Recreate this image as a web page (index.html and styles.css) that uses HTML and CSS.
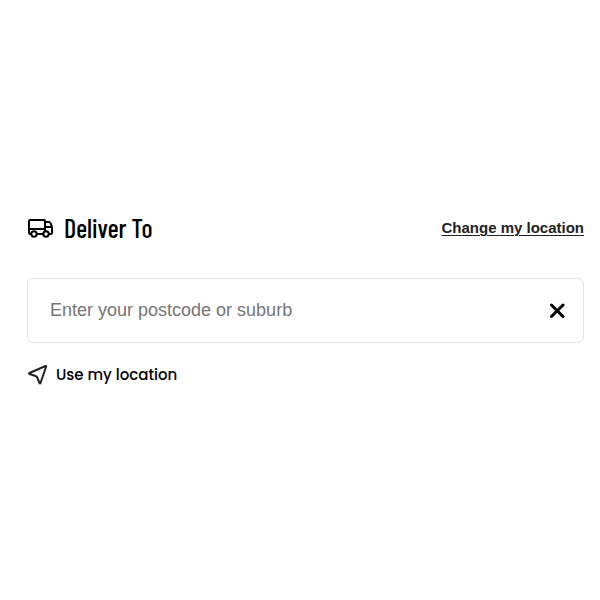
FILE: index.html
```html
<!DOCTYPE html>
<html lang="en">
<head>
    <meta charset="UTF-8">
    <meta name="viewport" content="width=device-width, initial-scale=1.0">
    <title>Deliver To</title>
    <link rel="stylesheet" href="styles.css">
</head>
<body>
    <main class="delivery">
        <div class="delivery-header">
            <h1>
                <svg width="26" height="20" viewBox="0 0 26 20" aria-hidden="true">
                    <path d="M4 16H3Q2 16 2 15V3Q2 2 3 2H17Q18 2 18 3V13M10 16H16M2 11H18M18 4H22Q23 4 24 6L25 10V15Q25 16 24 16H22M18 9H25"/>
                    <circle cx="7" cy="16" r="2.700"/>
                    <circle cx="19" cy="16" r="2.700"/>
                </svg>
                Deliver To
            </h1>
            <a href="#" class="change-link">Change my location</a>
        </div>
        <form class="search-box" id="location-form">
            <input type="text" id="postcode" name="postcode" aria-label="Enter your postcode or suburb" placeholder="Enter your postcode or suburb">
            <button type="reset" class="clear-button" aria-label="Clear">
                <svg width="16" height="16" viewBox="0 0 16 16" aria-hidden="true">
                    <path d="M2.500 3L14 14.500M14 3L2.500 14.500"/>
                </svg>
            </button>
        </form>
        <button type="button" class="locate-button">
            <svg width="20" height="20" viewBox="0 0 20 20" aria-hidden="true">
                <path d="M18.500 1Q19.500 1 19 2L13.500 18Q13 19 12.500 18L10 12Q9.500 11 8.500 11L2.500 9Q1.500 8.500 2.500 8Z"/>
            </svg>
            Use my location
        </button>
    </main>
</body>
</html>
```
FILE: styles.css
```css
* {
    box-sizing: border-box;
}
body {
    margin: 0;
    min-height: 100vh;
    display: flex;
    align-items: center;
    background-color: #fff;
    color: #000;
    font-family: "Liberation Sans", Arial, sans-serif;
}
.delivery {
    width: 100%;
    padding: 0 16px 2px 27px;
}
.delivery-header {
    display: flex;
    justify-content: space-between;
    align-items: center;
    margin-bottom: 34px;
}
h1 {
    display: flex;
    align-items: center;
    gap: 11px;
    margin: 0;
    font-family: "Barlow Condensed", "Roboto Condensed", "Liberation Sans", sans-serif;
    font-size: 26px;
    font-weight: 500;
    line-height: 32px;
}
svg {
    flex: none;
    fill: none;
    stroke: #000;
    stroke-width: 2;
    stroke-linecap: round;
    stroke-linejoin: round;
}
.change-link {
    color: #222;
    font-size: 15px;
    font-weight: 700;
    text-underline-offset: 2px;
    text-decoration-thickness: 1px;
}
.search-box {
    display: flex;
    align-items: center;
    height: 65px;
    padding: 0 18px 0 22px;
    border: 1px solid #e2e2e2;
    border-radius: 6px;
}
.search-box input {
    flex: 1;
    min-width: 0;
    padding: 0;
    border: none;
    outline: none;
    background: none;
    font-family: inherit;
    font-size: 18px;
}
.search-box input::placeholder {
    color: #757575;
}
.clear-button,
.locate-button {
    display: flex;
    align-items: center;
    padding: 0;
    border: none;
    background: none;
    color: #000;
    cursor: pointer;
}
.clear-button svg {
    stroke-width: 3;
}
.locate-button {
    gap: 9px;
    margin-top: 20px;
    font-family: Poppins, Inter, sans-serif;
    font-size: 15px;
    font-weight: 500;
    line-height: 24px;
}
.locate-button svg {
    stroke: #222;
}
```
